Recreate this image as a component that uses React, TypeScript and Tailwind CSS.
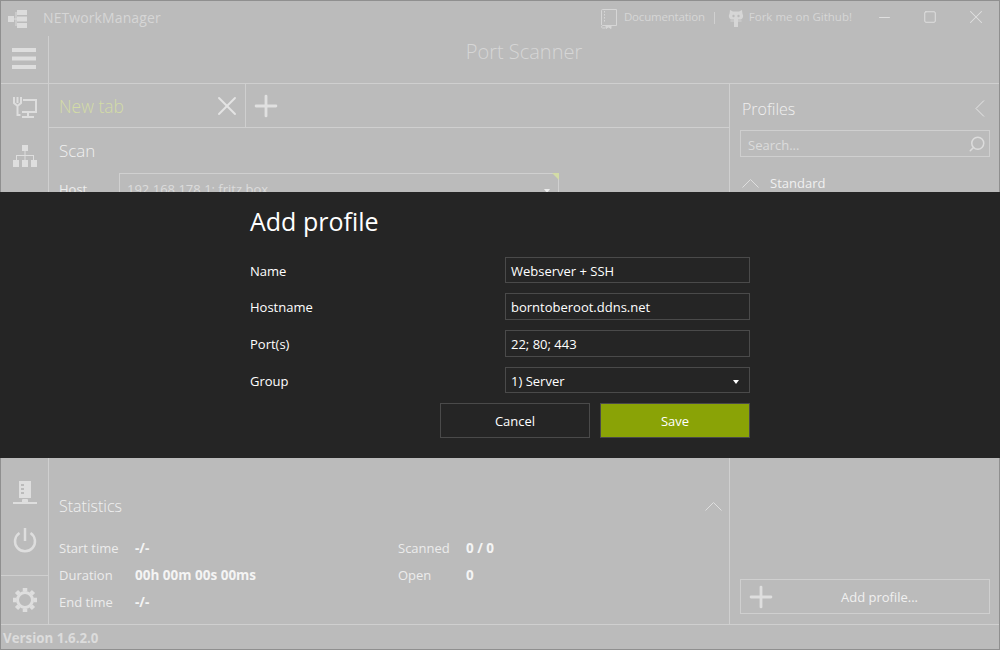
import type { ReactNode } from "react"
import { Plus, X, Minus, Square, Search } from "lucide-react"

const font = "font-['Open_Sans','Noto_Sans',sans-serif]"

// App logo, hierarchy with a node on the left
const LogoIcon = () => (
  <svg width="20" height="20" viewBox="0 0 20 20" fill="#dcdcdc">
    <rect x="0" y="7" width="6" height="6" />
    <rect x="9" y="1" width="10" height="5" />
    <rect x="9" y="7.5" width="10" height="5" />
    <rect x="9" y="14" width="10" height="5" />
    <rect x="6" y="9.5" width="3" height="1" />
    <rect x="7.5" y="3" width="1" height="14" />
  </svg>
)

const BookIcon = () => (
  <svg width="16" height="20" viewBox="0 0 16 20" fill="none" stroke="#d6d6d6" strokeWidth="1">
    <path d="M.5 16V1.500a1 1 0 0 1 1-1h14v16H2a1.500 1.500 0 0 0-1.500 1.500c0 .8.6 1 1.500 1h2" />
    <path d="M3.500 2v12" strokeDasharray="1.500 1.500" />
    <path d="M5 16.500h5v3l-2.500-1.500L5 19.500z" fill="#d6d6d6" />
  </svg>
)

const OctocatIcon = () => (
  <svg width="16" height="19" viewBox="0 0 16 19" fill="#d6d6d6">
    <path d="M2 1l3 1.500h6L14 1l.5 4c1 1 1 5-2 5.500H10v1h3.500v1H10V18H6v-5.500H2.500v-1H6v-1H3.500c-3-.5-3-4.500-2-5.500z" />
    <circle cx="5.500" cy="7" r="1.200" fill="#bbbbbb" />
    <circle cx="10.500" cy="7" r="1.200" fill="#bbbbbb" />
  </svg>
)

const HamburgerIcon = () => (
  <svg width="24" height="21" viewBox="0 0 24 21" fill="#dedede">
    <rect y="0" width="24" height="4" />
    <rect y="8.500" width="24" height="4" />
    <rect y="17" width="24" height="4" />
  </svg>
)

const NetworkInterfaceIcon = () => (
  <svg width="24" height="21" viewBox="0 0 24 21" fill="none" stroke="#dedede" strokeWidth="2">
    <path d="M10 3h13v12H9" />
    <path d="M1 0v6l3 2.500h1L8 6V0M4.500 0v6M4.500 8v10h3" />
    <path d="M15 15v4M9 20h12" />
  </svg>
)

const HierarchyIcon = () => (
  <svg width="24" height="22" viewBox="0 0 24 22" fill="#dedede">
    <rect x="9" y="0" width="6" height="6" />
    <rect x="0" y="15" width="6" height="7" />
    <rect x="9" y="15" width="6" height="7" />
    <rect x="18" y="15" width="6" height="7" />
    <rect x="11.500" y="6" width="1" height="9" />
    <rect x="3" y="10" width="18" height="1" />
    <rect x="3" y="10" width="1" height="5" />
    <rect x="20" y="10" width="1" height="5" />
  </svg>
)

const ServerIcon = () => (
  <svg width="24" height="24" viewBox="0 0 24 24" fill="#dedede">
    <path d="M6 0h12v17H6z" />
    <rect x="8" y="3" width="3" height="2" fill="#bbbbbb" />
    <rect x="8" y="7" width="3" height="2" fill="#bbbbbb" />
    <rect x="8" y="11" width="3" height="2" fill="#bbbbbb" />
    <rect x="0" y="21" width="24" height="2" />
    <rect x="9" y="18" width="6" height="5" rx="1" />
  </svg>
)

const PowerIcon = () => (
  <svg width="24" height="25" viewBox="0 0 24 25" fill="none" stroke="#dedede" strokeWidth="2.500">
    <path d="M12 0v13" />
    <path d="M6.500 5a10 10 0 1 0 11 0" />
  </svg>
)

const GearIcon = () => (
  <svg width="24" height="24" viewBox="0 0 24 24" fill="none" stroke="#dedede">
    <circle cx="12" cy="12" r="7.500" strokeWidth="3" />
    <path strokeWidth="4.500" d="M12 0v3.500M12 20.500V24M0 12h3.500M20.500 12H24M3.500 3.500l2.500 2.500M18 18l2.500 2.500M3.500 20.500L6 18M18 6l2.500-2.500" />
  </svg>
)

const ChevronUpLine = () => (
  <svg width="17" height="9" viewBox="0 0 17 9" fill="none" stroke="#dedede" strokeWidth="1">
    <path d="M.5 8.500l8-8 8 8" />
  </svg>
)

const ChevronLeftLine = () => (
  <svg width="10" height="17" viewBox="0 0 10 17" fill="none" stroke="#e4e4e4" strokeWidth="1">
    <path d="M9 .5l-8 8 8 8" />
  </svg>
)

const StatRow = ({ label, value, labelClass }: { label: string; value: string; labelClass: string }) => (
  <div className="flex h-[27px] items-center">
    <span className={`${labelClass} text-[#ececec]`}>{label}</span>
    <span className="text-[13.5px] font-bold text-[#f4f4f4]">{value}</span>
  </div>
)

const FormRow = ({ label, fieldHeight, children }: { label: string; fieldHeight: string; children: ReactNode }) => (
  <div className="flex items-center">
    <span className="w-[255px] pt-[3px] text-[13px] text-white">{label}</span>
    <div className={`${fieldHeight} flex w-[245px] items-center justify-between border border-[#4a4a4a] px-[5px] pt-[3px] text-[13px] text-white`}>
      {children}
    </div>
  </div>
)

export default function App() {
  return (
    <div className={`${font} relative h-[650px] w-[1000px] overflow-hidden text-[13px]`}>
      <div className="flex h-full w-full flex-col border border-[#8f8f8f] bg-[#bbbbbb]">
        {/* Title bar */}
        <div className="flex h-[35px] shrink-0 items-center text-[#d6d6d6]">
          <div className="ml-[7px]"><LogoIcon /></div>
          <span className="ml-[15px] pb-[2px] text-[14px] tracking-[0.1px]">NETworkManager</span>
          <div className="ml-auto flex items-center text-[11.5px]">
            <BookIcon />
            <span className="ml-[7px] pb-[3px] tracking-[-0.2px]">Documentation</span>
            <span className="mx-[9px] mb-[2px] h-[12px] w-px bg-[#d0d0d0]" />
            <div className="ml-[4px]"><OctocatIcon /></div>
            <span className="ml-[5px] pb-[3px]">Fork me on Github!</span>
          </div>
          <div className="ml-[9px] flex items-center pb-[3px]">
            <div className="flex w-[46px] justify-center"><Minus size={17} strokeWidth={1.400} color="#e0e0e0" /></div>
            <div className="flex w-[46px] justify-center"><Square size={14} strokeWidth={1.700} color="#e0e0e0" /></div>
            <div className="flex w-[46px] justify-center"><X size={22} strokeWidth={1.100} color="#e0e0e0" /></div>
          </div>
        </div>

        {/* Page header */}
        <div className="flex h-[48px] shrink-0 border-b border-[#cfcfcf]">
          <div className="flex w-[48px] items-center justify-center border-r border-[#cfcfcf] pb-[2px] pr-[1px]">
            <HamburgerIcon />
          </div>
          <div className="flex flex-1 items-center justify-center pb-[16px] text-[20px] font-light text-[#d6d6d6]">Port Scanner</div>
        </div>

        {/* Main */}
        <div className="flex min-h-0 flex-1 border-b border-[#cfcfcf]">
          <div className="flex w-[48px] shrink-0 flex-col items-center border-r border-[#cfcfcf]">
            <div className="mt-[13px]"><NetworkInterfaceIcon /></div>
            <div className="mt-[27px]"><HierarchyIcon /></div>
            <div className="mt-auto mb-[23px]"><ServerIcon /></div>
            <div className="mb-[22px]"><PowerIcon /></div>
            <div className="flex h-[49px] w-full items-center justify-center border-t border-[#cfcfcf]"><GearIcon /></div>
          </div>

          <div className="flex min-w-0 flex-1 flex-col">
            <div className="flex h-[44px] shrink-0 border-b border-[#cfcfcf]">
              <div className="flex w-[197px] items-center justify-between border-r border-[#cfcfcf] pl-[10px] pr-[2px]">
                <span className="pt-[1px] text-[17.5px] font-light text-[#d3dca6]">New tab</span>
                <X size={32} strokeWidth={1.400} color="#e4e4e4" />
              </div>
              <div className="ml-[3px] flex items-center">
                <Plus size={34} strokeWidth={2} color="#e0e0e0" />
              </div>
            </div>
            <div className="px-[10px]">
              <div className="mt-[10px] text-[17px] font-light text-[#f0f0f0]">Scan</div>
              <div className="mt-[9px] flex">
                <span className="w-[60px] pt-[7px] text-[#ececec]">Host</span>
                <div className="relative flex h-[36px] w-[440px] items-start justify-between border border-[#d0d0d0] px-[7px] pt-[6px] text-[#dcdcdc]">
                  <span>192.168.178.1; fritz.box</span>
                  <span className="mt-[9px] mr-[1px] border-x-[3px] border-t-[4px] border-x-transparent border-t-[#ececec]" />
                  <span className="absolute -right-px -top-px border-l-[7px] border-t-[7px] border-l-transparent border-t-[#d3dca6]" />
                </div>
              </div>
            </div>
            <div className="mt-auto flex items-center justify-between pl-[10px] pr-[7px] pb-[17px]">
              <span className="text-[16px] font-light text-[#f0f0f0]">Statistics</span>
              <ChevronUpLine />
            </div>
            <div className="flex px-[10px] pb-[8px]">
              <div className="w-[339px]">
                <StatRow label="Start time" value="-/-" labelClass="w-[76px]" />
                <StatRow label="Duration" value="00h 00m 00s 00ms" labelClass="w-[76px]" />
                <StatRow label="End time" value="-/-" labelClass="w-[76px]" />
              </div>
              <div>
                <StatRow label="Scanned" value="0 / 0" labelClass="w-[68px]" />
                <StatRow label="Open" value="0" labelClass="w-[68px]" />
              </div>
            </div>
          </div>

          {/* Profiles */}
          <div className="flex w-[270px] shrink-0 flex-col border-l border-[#cfcfcf] pl-[10px] pr-[9px]">
            <div className="mt-[11px] flex items-center justify-between">
              <span className="ml-[2px] pt-[2px] text-[16px] font-light text-[#f0f0f0]">Profiles</span>
              <div className="mr-[5px]"><ChevronLeftLine /></div>
            </div>
            <div className="mt-[9px] flex h-[27px] items-center justify-between border border-[#cfcfcf] px-[7px] text-[#dcdcdc]">
              <span className="pt-[4px]">Search...</span>
              <Search size={18} strokeWidth={2} color="#dcdcdc" className="-mr-[4px] -scale-x-100" />
            </div>
            <div className="mt-[16px] flex items-center text-[#f0f0f0]">
              <div className="ml-[2px]"><ChevronUpLine /></div>
              <span className="ml-[11px] pt-[1px]">Standard</span>
            </div>
            <div className="mt-auto mb-[10px] flex h-[35px] items-center border border-[#cfcfcf]">
              <Plus size={34} strokeWidth={2} color="#dedede" className="ml-[3px]" />
              <span className="flex-1 pr-[8px] pt-[3px] text-center text-[#f0f0f0]">Add profile...</span>
            </div>
          </div>
        </div>

        {/* Version */}
        <div className="flex h-[24px] shrink-0 items-center pl-[2px] pt-[3px] text-[13.300px] font-bold text-[#dcdcdc]">Version 1.6.2.0</div>
      </div>

      {/* Dialog overlay */}
      <div className="absolute left-0 top-[192px] h-[266px] w-[1000px] bg-[#252525] pl-[250px] pt-[11px]">
        <div className="h-[38px] text-[25px] text-white">Add profile</div>
        <div className="mt-[16px] flex w-[500px] flex-col gap-[10px]">
          <FormRow label="Name" fieldHeight="h-[26px]"><span>Webserver + SSH</span></FormRow>
          <FormRow label="Hostname" fieldHeight="h-[27px]"><span>borntoberoot.ddns.net</span></FormRow>
          <FormRow label="Port(s)" fieldHeight="h-[27px]"><span>22; 80; 443</span></FormRow>
          <FormRow label="Group" fieldHeight="h-[26px]">
            <span>1) Server</span>
            <span className="mr-[5px] border-x-[3px] border-t-[4px] border-x-transparent border-t-white" />
          </FormRow>
        </div>
        <div className="mt-[10px] flex w-[500px] justify-end gap-[10px]">
          <div className="flex h-[35px] w-[150px] items-center justify-center border border-[#4a4a4a] pt-[2px] text-[13px] text-white">Cancel</div>
          <div className="flex h-[35px] w-[150px] items-center justify-center border border-[#4a4a4a] bg-[#8aa306] pt-[2px] text-[13px] text-white">Save</div>
        </div>
      </div>
    </div>
  )
}
